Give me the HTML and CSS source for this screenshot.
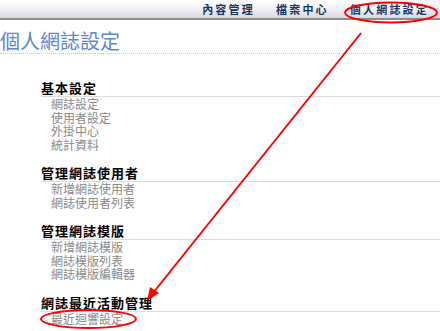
FILE: index.html
```html
<!DOCTYPE html>
<html lang="zh-Hant">
<head>
<meta charset="utf-8">
<title>個人網誌設定</title>
<link rel="stylesheet" href="styles.css">
</head>
<body>
<div class="page">
  <div class="topbar">
    <nav class="nav">
      <a class="nav-item">內容管理</a>
      <a class="nav-item">檔案中心</a>
      <a class="nav-item">個人網誌設定</a>
    </nav>
  </div>
  <h1 class="title">個人網誌設定</h1>
  <div class="sections">
    <section class="section">
      <h2 class="section-head">基本設定</h2>
      <ul class="links">
        <li>網誌設定</li>
        <li>使用者設定</li>
        <li>外掛中心</li>
        <li>統計資料</li>
      </ul>
    </section>
    <section class="section">
      <h2 class="section-head">管理網誌使用者</h2>
      <ul class="links">
        <li>新增網誌使用者</li>
        <li>網誌使用者列表</li>
      </ul>
    </section>
    <section class="section">
      <h2 class="section-head">管理網誌模版</h2>
      <ul class="links">
        <li>新增網誌模版</li>
        <li>網誌模版列表</li>
        <li>網誌模版編輯器</li>
      </ul>
    </section>
    <section class="section">
      <h2 class="section-head">網誌最近活動管理</h2>
      <ul class="links">
        <li>最近迴響設定</li>
      </ul>
    </section>
  </div>
  <svg class="annot" width="440" height="331" viewBox="0 0 440 331">
    <ellipse cx="391" cy="12.5" rx="46" ry="10" fill="none" stroke="#f00" stroke-width="2"/>
    <ellipse cx="88.5" cy="319" rx="47.5" ry="9" fill="none" stroke="#f00" stroke-width="2"/>
    <line x1="361" y1="33" x2="153" y2="293" stroke="#f00" stroke-width="2"/>
    <polygon points="147,301 150,287 159,293" fill="#f00"/>
  </svg>
</div>
</body>
</html>
```
FILE: styles.css
```css
html, body {
  margin: 0;
  padding: 0;
  background: #fff;
}
.page {
  position: relative;
  width: 440px;
  height: 331px;
  overflow: hidden;
  font-family: "Noto Sans CJK TC", "Noto Sans CJK SC", sans-serif;
}
.topbar {
  height: 18px;
  background: linear-gradient(#ffffff, #f4f4f8 40%, #d9d9e3);
  border-bottom: 2px solid #8c8c8c;
}
.nav {
  display: flex;
  justify-content: flex-end;
  gap: 21px;
  padding-right: 11px;
  height: 18px;
  align-items: center;
}
.nav-item {
  font-size: 11px;
  font-weight: 700;
  color: #16365f;
  letter-spacing: 2.2px;
  line-height: 18px;
}
.title {
  margin: 9px 0 0 0;
  font-size: 20px;
  line-height: 24px;
  font-weight: 400;
  color: #5b88cf;
  letter-spacing: 0;
  border-bottom: 1px dotted #c8c8c8;
}
.sections {
  margin: 26px 0 0 41px;
}
.section + .section {
  margin-top: 14px;
}
.section-head {
  margin: 0;
  font-size: 13px;
  line-height: 16px;
  font-weight: 700;
  color: #000;
  letter-spacing: 1px;
  border-bottom: 1px solid #dcdcdc;
}
.links {
  list-style: none;
  margin: 0;
  padding: 0 0 0 10px;
}
.links li {
  font-size: 12px;
  line-height: 13.5px;
  color: #8a8a8a;
}
.annot {
  position: absolute;
  left: 0;
  top: 0;
  pointer-events: none;
}
```
